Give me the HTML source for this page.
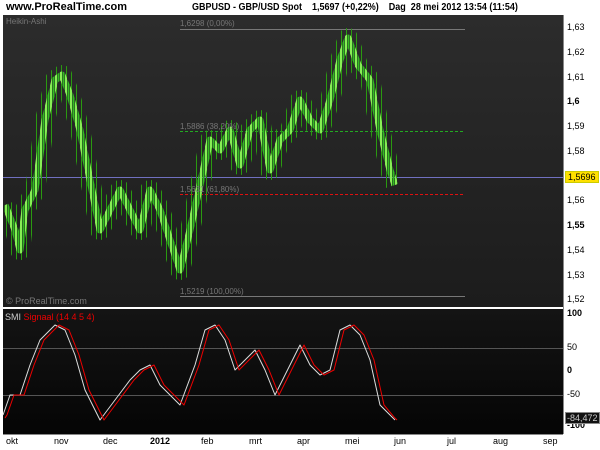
<!DOCTYPE html><html><head><style>
body{margin:0;width:600px;height:450px;background:#fff;position:relative;overflow:hidden;font-family:"Liberation Sans",sans-serif}
.t{position:absolute;font-size:10px;color:#000;white-space:nowrap}
.r{position:absolute;left:567px;font-size:9px;color:#000}
.m{position:absolute;top:436px;font-size:9px;color:#000}
</style></head><body>
<div class="t" style="left:6px;top:1px;font-weight:bold;font-size:11px">www.ProRealTime.com</div>
<div class="t" style="left:192px;top:2px;font-size:10px;font-weight:bold;transform:scaleX(0.9);transform-origin:left">GBPUSD - GBP/USD Spot &nbsp;&nbsp; 1,5697 (+0,22%) &nbsp;&nbsp; Dag &nbsp;28 mei 2012 13:54 (11:54)</div>
<svg width="600" height="450" style="position:absolute;left:0;top:0">
<defs><linearGradient id="g1" x1="0" y1="0" x2="0" y2="1"><stop offset="0" stop-color="#2c2c2c"/><stop offset="1" stop-color="#1c1c1c"/></linearGradient>
<linearGradient id="g2" x1="0" y1="0" x2="0" y2="1"><stop offset="0" stop-color="#141414"/><stop offset="1" stop-color="#050505"/></linearGradient>
<pattern id="wk" width="5" height="10" patternUnits="userSpaceOnUse"><rect x="1" width="1" height="10" fill="#2a9a10"/></pattern>
<pattern id="bd" width="5" height="10" patternUnits="userSpaceOnUse"><rect x="0" width="2" height="10" fill="#8e5"/><rect x="2.5" width="2" height="10" fill="#3b2"/></pattern>
<mask id="m1"><polyline fill="none" stroke="#fff" stroke-width="20" stroke-linejoin="round" points="5,205 15,230 20,250 25,210 35,190 45,120 55,80 62,75 70,95 80,130 90,180 100,230 110,210 120,190 130,210 140,230 150,190 160,210 170,240 180,270 190,230 200,185 210,140 220,150 230,130 240,165 250,130 260,120 270,170 280,140 290,130 300,100 310,120 320,130 330,100 340,60 348,38 358,65 370,80 380,130 390,170 395,185"/></mask>
<mask id="m2"><polyline fill="none" stroke="#fff" stroke-width="7" stroke-linejoin="round" points="5,205 15,230 20,250 25,210 35,190 45,120 55,80 62,75 70,95 80,130 90,180 100,230 110,210 120,190 130,210 140,230 150,190 160,210 170,240 180,270 190,230 200,185 210,140 220,150 230,130 240,165 250,130 260,120 270,170 280,140 290,130 300,100 310,120 320,130 330,100 340,60 348,38 358,65 370,80 380,130 390,170 395,185"/></mask>
</defs>
<rect x="3" y="15" width="560" height="292" fill="url(#g1)"/>
<rect x="3" y="309" width="560" height="125" fill="url(#g2)"/>
<line x1="563.5" y1="15" x2="563.5" y2="434" stroke="#888"/>
<line x1="3" y1="434.5" x2="563" y2="434.5" stroke="#888"/>
<line x1="180" y1="29.5" x2="465" y2="29.5" stroke="#777"/>
<line x1="180" y1="296.5" x2="465" y2="296.5" stroke="#777"/>
<line x1="180" y1="131.5" x2="465" y2="131.5" stroke="#22aa22" stroke-dasharray="3,2"/>
<line x1="180" y1="194.5" x2="465" y2="194.5" stroke="#e01010" stroke-dasharray="3,2"/>
<line x1="3" y1="177.5" x2="563" y2="177.5" stroke="#7070c0"/>
<line x1="3" y1="348.5" x2="563" y2="348.5" stroke="#555"/>
<line x1="3" y1="395.5" x2="563" y2="395.5" stroke="#555"/>
<rect x="4" y="15" width="394" height="290" fill="url(#wk)" mask="url(#m1)"/>
<rect x="4" y="15" width="394" height="290" fill="url(#bd)" mask="url(#m2)"/>
<polyline fill="none" stroke="#ddd" stroke-linejoin="round" points="3,415 10,395 20,395 30,365 40,340 55,325 65,330 75,355 85,390 100,420 115,400 130,380 140,370 150,365 160,385 170,395 180,405 195,365 205,330 215,325 225,340 235,370 245,360 255,350 265,370 275,395 290,365 300,345 310,365 320,375 330,370 340,330 350,325 360,335 370,360 380,405 390,415 395,420"/>
<polyline fill="none" stroke="#e00" stroke-linejoin="round" points="5,418 7,415 14,395 24,395 34,365 44,340 59,325 69,330 79,355 89,390 104,420 119,400 134,380 144,370 154,365 164,385 174,395 184,405 199,365 209,330 219,325 229,340 239,370 249,360 259,350 269,370 279,395 294,365 304,345 314,365 324,375 334,370 344,330 354,325 364,335 374,360 384,405 394,417 397,420"/>
<g font-family="Liberation Sans" font-size="8" fill="#777">
<text x="6" y="24">Heikin-Ashi</text>
<text x="180" y="26">1,6298 (0,00%)</text>
<text x="180" y="129">1,5886 (38,20%)</text>
<text x="180" y="192">1,5631 (61,80%)</text>
<text x="180" y="294">1,5219 (100,00%)</text>
<text x="6" y="304" font-size="9">© ProRealTime.com</text>
</g>
<text x="5" y="320" font-family="Liberation Sans" font-size="9" fill="#ccc">SMI <tspan fill="#e00">Signaal (14 4 5 4)</tspan></text>
</svg>
<div class="r" style="top:22px">1,63</div><div class="r" style="top:47px">1,62</div><div class="r" style="top:72px">1,61</div>
<div class="r" style="top:96px;font-weight:bold">1,6</div><div class="r" style="top:121px">1,59</div><div class="r" style="top:146px">1,58</div>
<div class="r" style="top:171px;left:565px;background:#ffe000;padding:0 2px;border:1px solid #cc0">1,5696</div>
<div class="r" style="top:195px">1,56</div><div class="r" style="top:220px;font-weight:bold">1,55</div><div class="r" style="top:245px">1,54</div>
<div class="r" style="top:270px">1,53</div><div class="r" style="top:294px">1,52</div>
<div class="r" style="top:308px;font-weight:bold">100</div><div class="r" style="top:342px">50</div><div class="r" style="top:365px;font-weight:bold">0</div>
<div class="r" style="top:389px">-50</div><div class="r" style="top:420px;font-weight:bold">-100</div>
<div class="r" style="top:412px;left:565px;background:#111;color:#ccc;border:1px solid #888;padding:0 1px">-84,472</div>
<div class="m" style="left:6px">okt</div><div class="m" style="left:54px">nov</div><div class="m" style="left:103px">dec</div>
<div class="m" style="left:150px;font-weight:bold">2012</div><div class="m" style="left:201px">feb</div><div class="m" style="left:249px">mrt</div>
<div class="m" style="left:297px">apr</div><div class="m" style="left:345px">mei</div><div class="m" style="left:394px">jun</div>
<div class="m" style="left:447px">jul</div><div class="m" style="left:493px">aug</div><div class="m" style="left:543px">sep</div>
</body></html>
